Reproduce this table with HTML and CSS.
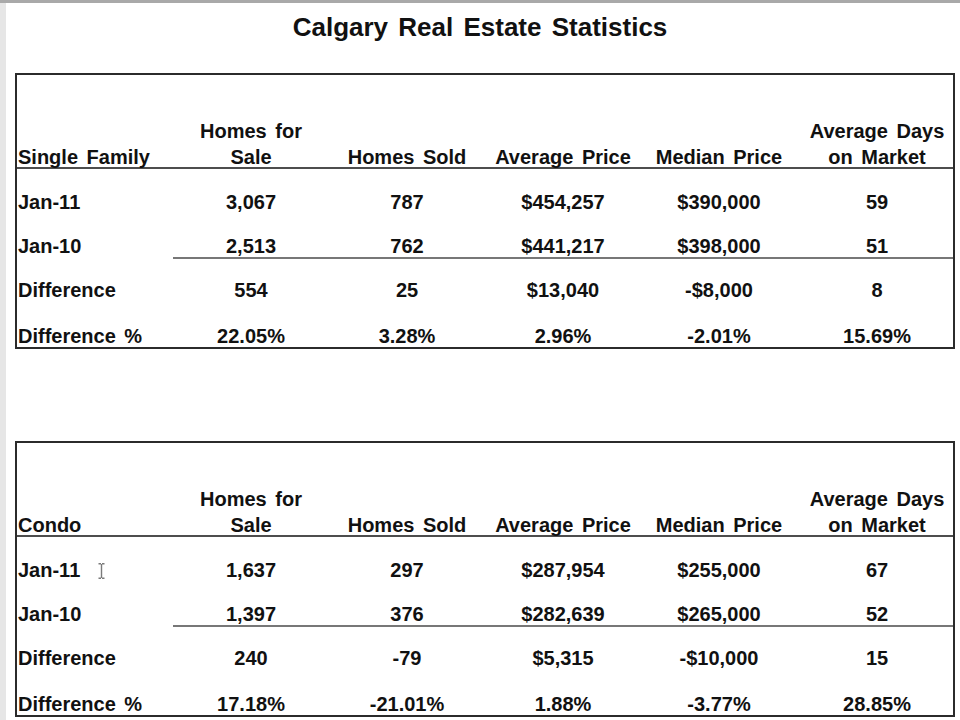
FILE: index.html
```html
<!DOCTYPE html>
<html lang="en">
<head>
<meta charset="utf-8">
<title>Calgary Real Estate Statistics</title>
<link rel="stylesheet" href="styles.css">
</head>
<body>
  <h1 class="title">Calgary Real Estate Statistics</h1>

  <section class="stats">
    <div class="row head">
      <div class="cell label">Single Family</div>
      <div class="cell">Homes for<br>Sale</div>
      <div class="cell">Homes Sold</div>
      <div class="cell">Average Price</div>
      <div class="cell">Median Price</div>
      <div class="cell">Average Days<br>on Market</div>
    </div>
    <div class="row body-row">
      <div class="cell label">Jan-11</div>
      <div class="cell">3,067</div>
      <div class="cell">787</div>
      <div class="cell">$454,257</div>
      <div class="cell">$390,000</div>
      <div class="cell">59</div>
    </div>
    <div class="row body-row sep">
      <div class="cell label">Jan-10</div>
      <div class="cell">2,513</div>
      <div class="cell">762</div>
      <div class="cell">$441,217</div>
      <div class="cell">$398,000</div>
      <div class="cell">51</div>
    </div>
    <div class="row body-row after-sep">
      <div class="cell label">Difference</div>
      <div class="cell">554</div>
      <div class="cell">25</div>
      <div class="cell">$13,040</div>
      <div class="cell">-$8,000</div>
      <div class="cell">8</div>
    </div>
    <div class="row body-row last">
      <div class="cell label">Difference %</div>
      <div class="cell">22.05%</div>
      <div class="cell">3.28%</div>
      <div class="cell">2.96%</div>
      <div class="cell">-2.01%</div>
      <div class="cell">15.69%</div>
    </div>
  </section>

  <section class="stats">
    <div class="row head">
      <div class="cell label">Condo</div>
      <div class="cell">Homes for<br>Sale</div>
      <div class="cell">Homes Sold</div>
      <div class="cell">Average Price</div>
      <div class="cell">Median Price</div>
      <div class="cell">Average Days<br>on Market</div>
    </div>
    <div class="row body-row">
      <div class="cell label has-cursor">Jan-11
        <svg class="ibeam" width="7" height="16" viewBox="0 0 7 16" aria-hidden="true">
          <path d="M0.5 0.8h2.5M4 0.8h2.5M3.5 1v14M0.5 15.2h2.5M4 15.2h2.5" stroke="#7a7a7a" stroke-width="1.4" fill="none"/>
        </svg>
      </div>
      <div class="cell">1,637</div>
      <div class="cell">297</div>
      <div class="cell">$287,954</div>
      <div class="cell">$255,000</div>
      <div class="cell">67</div>
    </div>
    <div class="row body-row sep">
      <div class="cell label">Jan-10</div>
      <div class="cell">1,397</div>
      <div class="cell">376</div>
      <div class="cell">$282,639</div>
      <div class="cell">$265,000</div>
      <div class="cell">52</div>
    </div>
    <div class="row body-row after-sep">
      <div class="cell label">Difference</div>
      <div class="cell">240</div>
      <div class="cell">-79</div>
      <div class="cell">$5,315</div>
      <div class="cell">-$10,000</div>
      <div class="cell">15</div>
    </div>
    <div class="row body-row last">
      <div class="cell label">Difference %</div>
      <div class="cell">17.18%</div>
      <div class="cell">-21.01%</div>
      <div class="cell">1.88%</div>
      <div class="cell">-3.77%</div>
      <div class="cell">28.85%</div>
    </div>
  </section>
</body>
</html>
```

FILE: styles.css
```css
html {
  background: #ffffff;
}

body {
  margin: 0;
  min-height: 720px;
  background: #ffffff;
  box-shadow: inset 0 3px 0 #a9a9a9, inset 6px 0 0 #e6e6e6;
  font-family: "Liberation Sans", Arial, sans-serif;
  font-weight: bold;
  color: #111111;
  word-spacing: 3px;
  overflow: hidden;
}

.title {
  margin: 0;
  padding-top: 13px;
  font-size: 26px;
  line-height: 29px;
  font-weight: bold;
  text-align: center;
}

.stats {
  box-sizing: border-box;
  width: 940px;
  margin: 31px 0 0 15px;
  border: 2px solid #2b2b2b;
}

.stats + .stats {
  margin-top: 92px;
}

.row {
  display: grid;
  grid-template-columns: repeat(6, 156px);
  font-size: 20px;
}

.cell {
  text-align: center;
  white-space: nowrap;
}

.cell:last-child {
  padding-left: 4px;
}

.label {
  text-align: left;
  padding-left: 1px;
}

.head {
  height: 92px;
  align-items: end;
  line-height: 26px;
  border-bottom: 2px solid #4d4d4d;
}

.head .cell {
  margin-bottom: -3px;
}

.body-row {
  line-height: 22px;
  padding-top: 22px;
}

.sep .cell:not(.label) {
  border-bottom: 2px solid #777777;
}

.after-sep {
  padding-top: 20px;
}

.last {
  padding-top: 24px;
}

.has-cursor {
  position: relative;
}

.ibeam {
  position: absolute;
  left: 81px;
  top: 4px;
}
```
